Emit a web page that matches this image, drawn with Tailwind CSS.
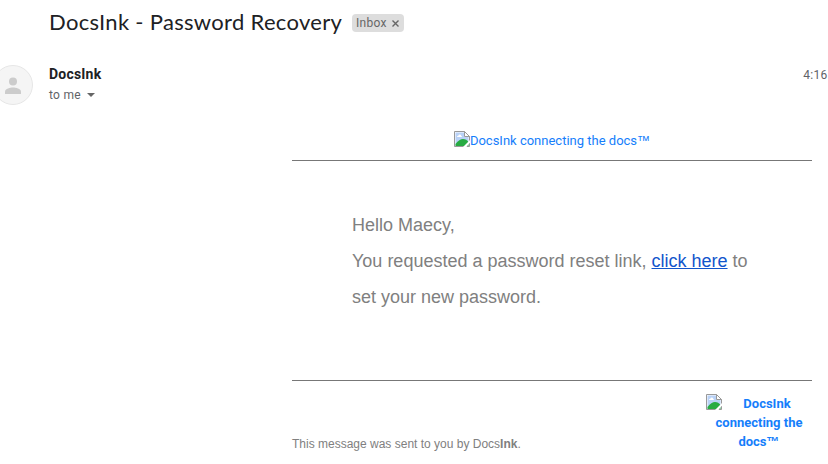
<!DOCTYPE html>
<html lang="en">
<head>
    <meta charset="UTF-8">
    <meta name="viewport" content="width=device-width, initial-scale=1.0">
    <title>DocsInk - Password Recovery</title>
    <script src="https://cdn.jsdelivr.net/npm/@tailwindcss/browser@4"></script>
</head>
<body class="h-screen overflow-hidden bg-white font-[Roboto,sans-serif]">
    <!-- broken image icon -->
    <svg class="hidden">
        <symbol id="broken" viewBox="0 0 16 16">
            <path d="M.5.5h10l5 5v10H.5z" fill="#fff" stroke="#999"/>
            <path d="M1.500 1.500h9v4.500h4v8.500h-13z" fill="#b9d2f7"/>
            <path d="M3 6q0-1.200 1.300-1.200.3-1.300 1.500-1.300 1.200 0 1.400 1.300.8.2.8 1.200z" fill="#fff"/>
            <path d="M1.500 15v-2q4-5 7.500-5 3.500 0 5.500 3v4z" fill="#27ab42"/>
            <path d="M10.500.5v5h5z" fill="#fff" stroke="#999"/>
            <path d="M8.500 16.500L16.500 8.500v2.500L12 16.500z" fill="#fff"/>
        </symbol>
    </svg>

    <!-- subject -->
    <header class="flex h-[46px] items-center pl-[49px]">
        <h1 class="-mt-0.5 w-[303px] whitespace-nowrap font-[Lato,sans-serif] text-[22px] leading-7 tracking-[0.31px] text-[#202124]">DocsInk - Password Recovery</h1>
        <div class="flex h-[18px] w-[52px] items-center rounded bg-[#ddd] pl-1 text-xs text-[#666]">
            <span class="w-9 tracking-[0.3px]">Inbox</span>
            <svg class="mt-px size-[7px]" viewBox="0 0 7 7"><path d="M.5.5l6 6M6.500.5l-6 6" stroke="#666" stroke-width="1.400"/></svg>
        </div>
    </header>

    <!-- sender -->
    <section class="flex h-[85px] pt-[19px]">
        <svg class="-ml-[7px] size-10 shrink-0" viewBox="0 0 40 40">
            <circle cx="20" cy="20" r="19.500" fill="#f5f5f5" stroke="#e6e6e6"/>
            <circle cx="20" cy="16.500" r="4" fill="#ccc"/>
            <path d="M12 29v-2.500c0-2.700 5.300-4 8-4s8 1.300 8 4V29z" fill="#ccc"/>
        </svg>
        <div class="ml-4 grow">
            <p class="text-sm leading-[18px] font-bold tracking-[0.2px] text-[#202124]">DocsInk</p>
            <p class="mt-[3px] flex items-center text-xs leading-[18px] tracking-[0.3px] text-[#5f6368]">
                to me
                <svg class="ml-1.5 h-1 w-2" viewBox="0 0 8 4"><path d="M0 0h8L4 4z" fill="#666"/></svg>
            </p>
        </div>
        <span class="mr-[0.5px] text-xs leading-5 tracking-[0.3px] text-[#5f6368]">4:16</span>
    </section>

    <!-- message -->
    <main class="ml-[292px] w-[520px]">
        <div class="flex h-[30px] justify-center border-b border-[#777] text-[#157efb]">
            <svg class="size-4"><use href="#broken"/></svg>
            <span class="text-[13px] leading-[19px] whitespace-nowrap">DocsInk connecting the docs<span class="font-['Liberation_Sans',Arial,sans-serif]">™</span></span>
        </div>
        <div class="h-[220px] border-b border-[#777] px-[60px] pt-[46px] font-['Liberation_Sans',Arial,sans-serif] text-lg leading-9 text-[#808080]">
            <p>Hello Maecy,</p>
            <p>You requested a password reset link, <a href="#" class="text-[#1155cc] underline">click here</a> to set your new password.</p>
        </div>
        <footer class="flex justify-between pt-[13px]">
            <p class="mt-[41px] font-['Liberation_Sans',Arial,sans-serif] text-xs leading-[18px] text-[#808080]">This message was sent to you by Docs<b>Ink</b>.</p>
            <div class="flex w-[106px] text-[#157efb]">
                <svg class="size-4 shrink-0"><use href="#broken"/></svg>
                <p class="-ml-4 w-[106px] text-center text-[13px] leading-[19px] font-bold"><span class="pl-4">DocsInk</span><br>connecting the<br>docs<span class="font-['Liberation_Sans',Arial,sans-serif]">™</span></p>
            </div>
        </footer>
    </main>
</body>
</html>
